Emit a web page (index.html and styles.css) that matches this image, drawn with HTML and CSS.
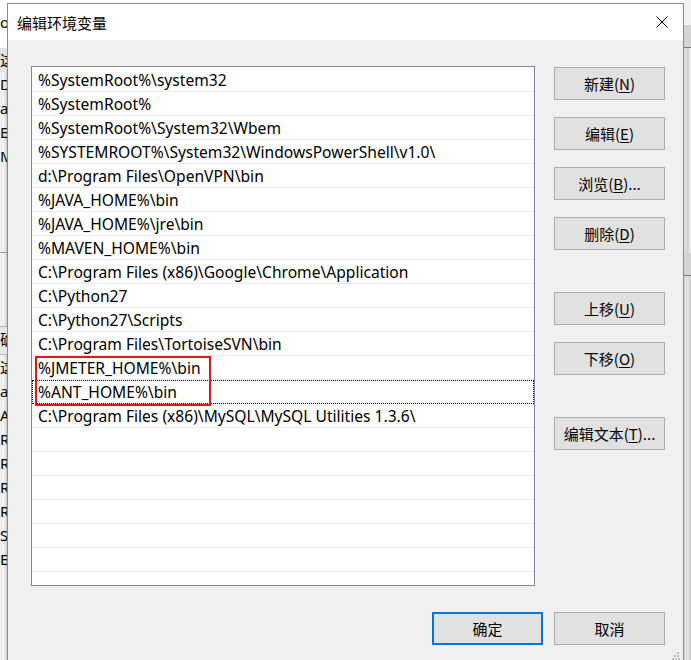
FILE: index.html
```html
<!DOCTYPE html>
<html lang="zh-CN">
<head>
    <meta charset="UTF-8">
    <meta name="viewport" content="width=device-width, initial-scale=1.0">
    <title>编辑环境变量</title>
    <link rel="stylesheet" href="styles.css">
</head>
<body>

    <div class="screen">
        <!-- 背后的“环境变量”窗口，只露出左边一条 -->
        <div class="behind behind-left">
            <div class="bl-item bl-top">o</div>
            <div class="bl-item bl-shade">这</div>
            <div class="bl-item">Dr</div>
            <div class="bl-item">a</div>
            <div class="bl-item">E</div>
            <div class="bl-item">M</div>
            <div class="bl-gap"></div>
            <div class="bl-blank"></div>
            <div class="bl-item bl-head">确</div>
            <div class="bl-item">这</div>
            <div class="bl-item">a</div>
            <div class="bl-item">A</div>
            <div class="bl-item">R</div>
            <div class="bl-item">R</div>
            <div class="bl-item">R</div>
            <div class="bl-item">R</div>
            <div class="bl-item">S</div>
            <div class="bl-item bl-cut">E</div>
        </div>

        <div class="dialog">
            <div class="titlebar">
                <span class="title">编辑环境变量</span>
                <button class="close" title="关闭">
                    <svg width="12" height="12" viewBox="0 0 12 12">
                        <path d="M0.5 0.5 L11.5 11.5 M11.5 0.5 L0.5 11.5" stroke="#000" stroke-width="1" fill="none"/>
                    </svg>
                </button>
            </div>

            <div class="content">
                <div class="main">
                    <div class="listbox">
                        <div class="row">%SystemRoot%\system32</div>
                        <div class="row">%SystemRoot%</div>
                        <div class="row">%SystemRoot%\System32\Wbem</div>
                        <div class="row">%SYSTEMROOT%\System32\WindowsPowerShell\v1.0\</div>
                        <div class="row">d:\Program Files\OpenVPN\bin</div>
                        <div class="row">%JAVA_HOME%\bin</div>
                        <div class="row">%JAVA_HOME%\jre\bin</div>
                        <div class="row">%MAVEN_HOME%\bin</div>
                        <div class="row">C:\Program Files (x86)\Google\Chrome\Application</div>
                        <div class="row">C:\Python27</div>
                        <div class="row">C:\Python27\Scripts</div>
                        <div class="row">C:\Program Files\TortoiseSVN\bin</div>
                        <div class="row">%JMETER_HOME%\bin</div>
                        <div class="row focused">%ANT_HOME%\bin</div>
                        <div class="row">C:\Program Files (x86)\MySQL\MySQL Utilities 1.3.6\</div>
                        <div class="row"></div>
                        <div class="row"></div>
                        <div class="row"></div>
                        <div class="row"></div>
                        <div class="row"></div>
                        <div class="row"></div>
                        <div class="row"></div>

                        <!-- 新加的两项用红框标出 -->
                        <div class="mark"></div>
                    </div>

                    <div class="side">
                        <button class="btn">新建(<u>N</u>)</button>
                        <button class="btn">编辑(<u>E</u>)</button>
                        <button class="btn">浏览(<u>B</u>)...</button>
                        <button class="btn">删除(<u>D</u>)</button>
                        <button class="btn spaced">上移(<u>U</u>)</button>
                        <button class="btn">下移(<u>O</u>)</button>
                        <button class="btn spaced">编辑文本(<u>T</u>)...</button>
                    </div>
                </div>

                <div class="footer">
                    <button class="btn default">确定</button>
                    <button class="btn">取消</button>
                </div>
            </div>

            <svg class="grip" width="8" height="8" viewBox="0 0 8 8">
                <rect x="5" y="0" width="2" height="2" fill="#bcbcbc"/>
                <rect x="2" y="3" width="2" height="2" fill="#bcbcbc"/>
                <rect x="5" y="3" width="2" height="2" fill="#bcbcbc"/>
                <rect x="0" y="6" width="2" height="2" fill="#bcbcbc"/>
                <rect x="3" y="6" width="2" height="2" fill="#bcbcbc"/>
                <rect x="6" y="6" width="2" height="2" fill="#bcbcbc"/>
            </svg>
        </div>

        <!-- 右边也露出一点背后的窗口 -->
        <div class="behind behind-right">
            <div class="br-top"></div>
            <div class="br-band"></div>
            <div class="br-track"></div>
            <div class="br-band"></div>
            <div class="br-rest"></div>
        </div>
    </div>

</body>
</html>
```

FILE: styles.css
```css
body {
    margin: 0;
    padding: 0;
    background-color: #ffffff;
    font-family: "Noto Sans", "Noto Sans CJK SC", sans-serif;
    color: #000;
}

.screen {
    display: grid;
    grid-template-columns: 7px 677px 7px;
    width: 691px;
    height: 660px;
    overflow: hidden;
}

/* 背后的窗口 */
.behind {
    overflow: hidden;
    font-size: 15px;
}

.behind-left {
    display: flex;
    flex-direction: column;
    background: linear-gradient(to right, #f0f0f0 0, #f0f0f0 4px, #d8d8d8 6px, #c8c8c8 7px);
}

.bl-item {
    height: 24px;
    line-height: 24px;
    white-space: nowrap;
    flex-shrink: 0;
}

.bl-top {
    height: 48px;
    line-height: 44px;
    background-color: #fff;
}

.bl-shade {
    background-color: #e3e3e3;
}

.bl-gap {
    height: 84px;
    flex-shrink: 0;
    border-bottom: 1px solid #9a9a9a;
}

.bl-blank {
    height: 73px;
    flex-shrink: 0;
    border-bottom: 1px solid #b0b0b0;
}

.bl-head {
    height: 27px;
    border-bottom: 1px solid #b8b8b8;
    background-color: #e8e8e8;
}

.bl-cut {
    height: 12px;
    line-height: 24px;
}

.behind-right {
    display: flex;
    flex-direction: column;
    background-color: #e6e6e6;
}

.br-top {
    height: 25px;
    background-color: #f2f2f2;
    flex-shrink: 0;
}

.br-band {
    height: 22px;
    background-color: #d4d4d4;
    border-bottom: 1px solid #7a7a7a;
    flex-shrink: 0;
}

.br-track {
    height: 205px;
    background: linear-gradient(to right, #dcdcdc 0, #dcdcdc 3px, #c4c4c4 4px, #e8e8e8 5px);
    flex-shrink: 0;
}

.br-rest {
    flex: 1;
    background: linear-gradient(to right, #d6d6d6 0, #e4e4e4 4px, #c8c8c8 7px);
}

/* 对话框 */
.dialog {
    position: relative;
    margin-top: 3px;
    border: 1px solid #8c8c8c;
    border-bottom: none;
    background-color: #f0f0f0;
    display: flex;
    flex-direction: column;
}

.titlebar {
    height: 36px;
    background-color: #ffffff;
    display: flex;
    align-items: center;
    justify-content: space-between;
    padding-left: 9px;
}

.title {
    font-size: 15px;
    font-family: "Noto Sans CJK SC", sans-serif;
}

.close {
    width: 42px;
    height: 36px;
    border: none;
    background: none;
    padding: 0;
    display: flex;
    align-items: center;
    justify-content: center;
}

.content {
    padding: 26px 18px 0 23px;
}

.main {
    display: flex;
    gap: 19px;
}

.listbox {
    position: relative;
    width: 504px;
    height: 520px;
    box-sizing: border-box;
    border: 1px solid #828790;
    background-color: #fff;
    padding-top: 1px;
    overflow: hidden;
}

.row {
    height: 23px;
    line-height: 25px;
    border-bottom: 1px solid #ececec;
    padding-left: 6px;
    font-size: 15.6px;
    white-space: nowrap;
}

.row.focused {
    outline: 1px dotted #000;
    outline-offset: -1px;
}

.mark {
    position: absolute;
    left: 3px;
    top: 289px;
    width: 176px;
    height: 50px;
    box-sizing: border-box;
    border: 2px solid #e8141a;
}

.side {
    display: flex;
    flex-direction: column;
    gap: 17px;
    padding-top: 1px;
}

.btn {
    width: 111px;
    height: 33px;
    box-sizing: border-box;
    border: 1px solid #adadad;
    background-color: #e1e1e1;
    font-family: "Noto Sans CJK SC", sans-serif;
    font-size: 15px;
    color: #000;
    padding: 0 0 1px;
    cursor: pointer;
}

.btn:hover {
    background-color: #e5f1fb;
    border-color: #0078d7;
}

.btn u {
    text-underline-offset: 2px;
}

.btn.spaced {
    margin-top: 25px;
}

.btn.default {
    border: 2px solid #0078d7;
}

.footer {
    display: flex;
    justify-content: flex-end;
    gap: 11px;
    margin-top: 26px;
}

.grip {
    position: absolute;
    right: 3px;
    bottom: 0;
}
```
